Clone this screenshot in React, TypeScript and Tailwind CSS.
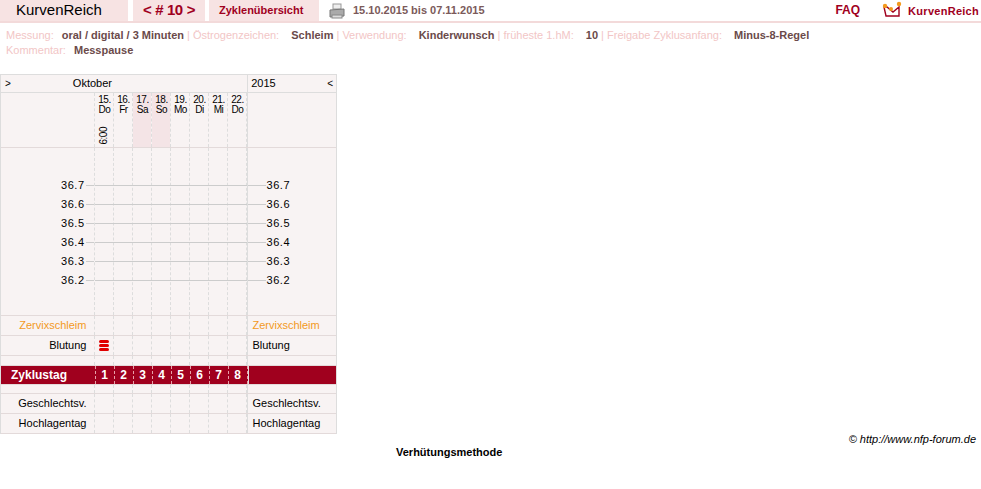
import React from 'react';

const days = [
  ['15.', 'Do'], ['16.', 'Fr'], ['17.', 'Sa'], ['18.', 'So'],
  ['19.', 'Mo'], ['20.', 'Di'], ['21.', 'Mi'], ['22.', 'Do'],
];
const temps = ['36.7', '36.6', '36.5', '36.4', '36.3', '36.2'];

function DayCells({ children, h }: { children?: (i: number) => React.ReactNode; h: string }) {
  return (
    <div className="flex">
      {days.map((d, i) => (
        <div key={i} className={`w-[19px] ${h} border-r border-dashed border-[#ddd]`}>
          {children ? children(i) : null}
        </div>
      ))}
    </div>
  );
}

function Row({ left, right, h = 'h-[19px]', cell }: {
  left?: React.ReactNode; right?: React.ReactNode; h?: string; cell?: (i: number) => React.ReactNode;
}) {
  return (
    <div className="flex border-b border-[#e3dada]">
      <div className={`w-[95px] ${h} flex items-center justify-end border-r border-dashed border-[#ddd]`}>{left}</div>
      <DayCells h={h}>{cell}</DayCells>
      <div className={`w-[89px] ${h} flex items-center pl-1 border-l border-[#ddd]`}>{right}</div>
    </div>
  );
}

export default function App() {
  return (
    <div className="w-[981px] h-[489px] bg-white text-[11px] text-black relative" style={{ fontFamily: '"Liberation Sans", Arial, sans-serif' }}>
      {/* top bar */}
      <div className="flex items-stretch h-[23px] border-b-2 border-[#f3dada]">
        <div className="w-[128px] bg-[#f7e3e3] flex items-center pl-4 text-[15px] text-black">KurvenReich</div>
        <div className="w-[5px]" />
        <div className="w-[72px] bg-[#f7e3e3] flex items-center justify-center text-[15px] text-[#a0001e] font-bold tracking-tight">&lt; # 10 &gt;</div>
        <div className="w-[4px]" />
        <div className="w-[110px] bg-[#f7e3e3] flex items-center pl-[10px] text-[11px] text-[#a0001e] font-bold">Zyklenübersicht</div>
        <div className="flex items-center pl-[10px] gap-[8px]">
          <svg width="16" height="16" viewBox="0 0 16 16">
            <rect x="4" y="1" width="8" height="5" fill="#eee" stroke="#999" />
            <path d="M1 7 L15 6 L15 13 L1 14 Z" fill="#aaa" stroke="#777" />
            <rect x="3" y="12" width="10" height="3" fill="#ddd" stroke="#888" />
          </svg>
          <span className="text-[11px] font-bold text-[#7b5a5a]">15.10.2015 bis 07.11.2015</span>
        </div>
        <div className="flex-1" />
        <div className="flex items-end pb-[2px] text-[12px] font-bold text-[#a0001e] mr-[22px]">FAQ</div>
        <div className="flex items-start gap-[6px] pt-[1px] mr-[2px]">
          <svg width="20" height="18" viewBox="0 0 20 18">
            <path d="M2 6 L4 15 L17 15 L17 6 L11 11 L5 6 Z" fill="#fff" stroke="#a0001e" strokeWidth="1.4" />
            <circle cx="3" cy="5" r="2.2" fill="#f39a1e" />
            <circle cx="9" cy="8" r="2" fill="#f39a1e" />
            <circle cx="17" cy="3" r="2.2" fill="#f39a1e" />
          </svg>
          <span className="text-[11px] font-bold text-[#a0001e] tracking-wide mt-[2px]">KurvenReich</span>
        </div>
      </div>
      {/* info */}
      <div className="pl-[6px] pt-[5px] text-[11px] leading-[15px]">
        <div className="whitespace-nowrap">
          <span className="text-[#f2c6c6]">Messung: </span><span className="text-[#6b4a4a] font-bold ml-[5px]">oral / digital / 3 Minuten</span>
          <span className="text-[#f2c6c6]"> | Östrogenzeichen: </span><span className="text-[#6b4a4a] font-bold ml-[9px]">Schleim</span>
          <span className="text-[#f2c6c6]"> | Verwendung: </span><span className="text-[#6b4a4a] font-bold ml-[9px]">Kinderwunsch</span>
          <span className="text-[#f2c6c6]"> | früheste 1.hM: </span><span className="text-[#6b4a4a] font-bold ml-[9px]">10</span>
          <span className="text-[#f2c6c6]"> | Freigabe Zyklusanfang: </span><span className="text-[#6b4a4a] font-bold ml-[9px]">Minus-8-Regel</span>
        </div>
        <div>
          <span className="text-[#f2c6c6]">Kommentar: </span><span className="text-[#6b4a4a] font-bold ml-[5px]">Messpause</span>
        </div>
      </div>

      {/* chart */}
      <div className="mt-[16px] w-[337px] bg-[#f8f3f3] border-t border-l border-r border-[#ddd]">
        <div className="flex h-[18px] border-b border-[#ddd]">
          <div className="w-[247px] flex items-center px-[4px]">
            <span className="text-[10px]">&gt;</span>
            <span className="ml-[62px]">Oktober</span>
          </div>
          <div className="w-[89px] flex items-center justify-between px-[3px] border-l border-[#ddd]">
            <span>2015</span><span className="text-[10px]">&lt;</span>
          </div>
        </div>
        <Row h="h-[54px]" cell={(i) => (
          <div className={`h-full flex flex-col items-center pt-[2px] leading-[10px] text-[10px] tracking-tighter ${i === 2 || i === 3 ? 'bg-[#f4e4e6]' : ''}`}>
            <span>{days[i][0]}</span><span>{days[i][1]}</span>
            {i === 0 && <span className="mt-[12px] [writing-mode:vertical-rl] rotate-180">6:00</span>}
          </div>
        )} />
        {/* temperature area */}
        <div className="flex border-b border-[#e3dada] h-[168px]">
          <div className="w-[95px] border-r border-dashed border-[#ddd] pt-[28px]">
            {temps.map((t) => (
              <div key={t} className="h-[19px] flex items-center">
                <span className="ml-[60px] tracking-wider">{t}</span>
                <span className="flex-1 border-t border-[#ccc] ml-[1px]" />
              </div>
            ))}
          </div>
          <div className="flex relative">
            {days.map((d, i) => (
              <div key={i} className="w-[19px] h-full border-r border-dashed border-[#ddd]" />
            ))}
            <div className="absolute inset-x-0 top-[28px]">
              {temps.map((t) => (
                <div key={t} className="h-[19px] flex items-center"><span className="flex-1 border-t border-[#ccc]" /></div>
              ))}
            </div>
          </div>
          <div className="w-[89px] border-l border-[#ddd] pt-[28px]">
            {temps.map((t) => (
              <div key={t} className="h-[19px] flex items-center">
                <span className="w-[18px] border-t border-[#ccc]" />
                <span className="tracking-wider">{t}</span>
              </div>
            ))}
          </div>
        </div>
        <Row left={<span className="text-[#f39a1e] pr-[8px]">Zervixschleim</span>} right={<span className="text-[#f39a1e]">Zervixschleim</span>} />
        <Row left={<span className="pr-[8px]">Blutung</span>} right="Blutung" cell={(i) => i === 0 ? (
          <div className="h-full flex flex-col items-center justify-center gap-[1px]">
            {[0, 1, 2].map((k) => <span key={k} className="w-[10px] h-[3px] rounded-full bg-[#e00000]" />)}
          </div>
        ) : null} />
        <Row h="h-[9px]" />
        <div className="flex h-[19px] bg-[#a0001e] text-white font-bold text-[12px] border-b border-[#e3dada]">
          <div className="w-[95px] flex items-center pl-[10px] border-r border-dashed border-[#e8a0a8]">Zyklustag</div>
          <div className="flex">
            {days.map((d, i) => (
              <div key={i} className="w-[19px] flex items-center justify-center border-r border-dashed border-[#e8a0a8]">{i + 1}</div>
            ))}
          </div>
          <div className="w-[89px] border-l border-[#ddd]" />
        </div>
        <Row h="h-[8px]" />
        <Row left={<span className="pr-[8px]">Geschlechtsv.</span>} right="Geschlechtsv." />
        <Row left={<span className="pr-[8px]">Hochlagentag</span>} right="Hochlagentag" />
      </div>
      <div className="absolute right-[5px] top-[431px] italic text-[11px]">© http://www.nfp-forum.de</div>
      <div className="absolute left-[396px] top-[444px] font-bold text-[11px]">Verhütungsmethode</div>
    </div>
  );
}
